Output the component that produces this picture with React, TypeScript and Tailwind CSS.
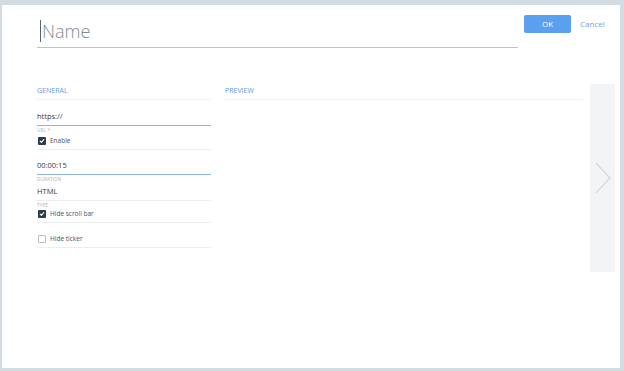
import React from 'react';

const font = { fontFamily: '"Open Sans", "Liberation Sans", sans-serif' };

function Check({ checked }: { checked: boolean }) {
  if (!checked) {
    return <span className="w-[8px] h-[8px] rounded-[1px] border border-[#b9bfc6] bg-white shrink-0" />;
  }
  return (
    <span className="w-[8px] h-[8px] rounded-[1px] bg-[#2c3b50] flex items-center justify-center shrink-0">
      <svg width="6" height="6" viewBox="0 0 10 10" fill="none">
        <path d="M2 5.2l2 2L8 2.8" stroke="white" strokeWidth="1.8" strokeLinecap="round" strokeLinejoin="round" />
      </svg>
    </span>
  );
}

function Field({ value, label, active }: { value: string; label: string; active?: boolean }) {
  return (
    <div className="flex flex-col">
      <div className={`text-[7.5px] text-[#333b44] leading-none pb-[4px] border-b ${active ? 'border-[#8fb3dc]' : 'border-[#eceef0]'}`}>
        {value}
      </div>
      <div className="text-[4.5px] text-[#a9b0b8] tracking-[0.2px] uppercase leading-none mt-[2px]">{label}</div>
    </div>
  );
}

function CheckRow({ label, checked }: { label: string; checked: boolean }) {
  return (
    <div className="flex items-center gap-[4px] pl-[1px] pb-[4px] border-b border-[#eceef0]">
      <Check checked={checked} />
      <span className="text-[6.5px] text-[#4a535c] leading-none">{label}</span>
    </div>
  );
}

export default function App() {
  return (
    <div className="w-[624px] h-[371px] bg-[#d3dbe3] pt-[5px] pl-[2px] pr-[4px] pb-[3px]" style={font}>
      <div className="w-full h-full bg-white flex flex-col pl-[35px]">
        <div className="flex items-start mt-[10px]">
          <div className="w-[481px] h-[33px] border-b border-[#afc6de] flex items-center">
            <span className="w-px h-[22px] bg-[#5b6570] ml-[3px]" />
            <span className="text-[18px] font-light text-[#808b96] leading-none ml-[1px]">Name</span>
          </div>
          <button className="ml-[6px] w-[47px] h-[18px] bg-[#5b9ff0] rounded-[2px] text-white text-[8px] leading-none">OK</button>
          <span className="ml-[9px] mt-[5px] text-[8px] text-[#6aa3e3] leading-none">Cancel</span>
        </div>

        <div className="flex mt-[36px]">
          <div className="w-[174px] flex flex-col">
            <div className="text-[7px] text-[#5c9be0] leading-none pb-[5px] border-b border-[#f0f1f3] mt-[3px]">GENERAL</div>
            <div className="mt-[13px]">
              <Field value="https://" label="URL *" active />
            </div>
            <div className="mt-[5px]">
              <CheckRow label="Enable" checked />
            </div>
            <div className="mt-[12px]">
              <Field value="00:00:15" label="DURATION" active />
            </div>
            <div className="mt-[7px]">
              <Field value="HTML" label="TYPE" />
            </div>
            <div className="mt-[3px]">
              <CheckRow label="Hide scroll bar" checked />
            </div>
            <div className="mt-[12px]">
              <CheckRow label="Hide ticker" checked={false} />
            </div>
          </div>
          <div className="ml-[14px] w-[358px] flex flex-col">
            <div className="text-[7px] text-[#5c9be0] leading-none pb-[5px] border-b border-[#f0f1f3] mt-[3px]">PREVIEW</div>
          </div>
          <div className="ml-[7px] w-[25px] h-[188px] bg-[#f3f4f6] flex items-center justify-center">
            <svg width="16" height="32" viewBox="0 0 16 32" fill="none">
              <path d="M1 1l14 15L1 31" stroke="#d3d7dc" strokeWidth="1.2" />
            </svg>
          </div>
        </div>
      </div>
    </div>
  );
}
